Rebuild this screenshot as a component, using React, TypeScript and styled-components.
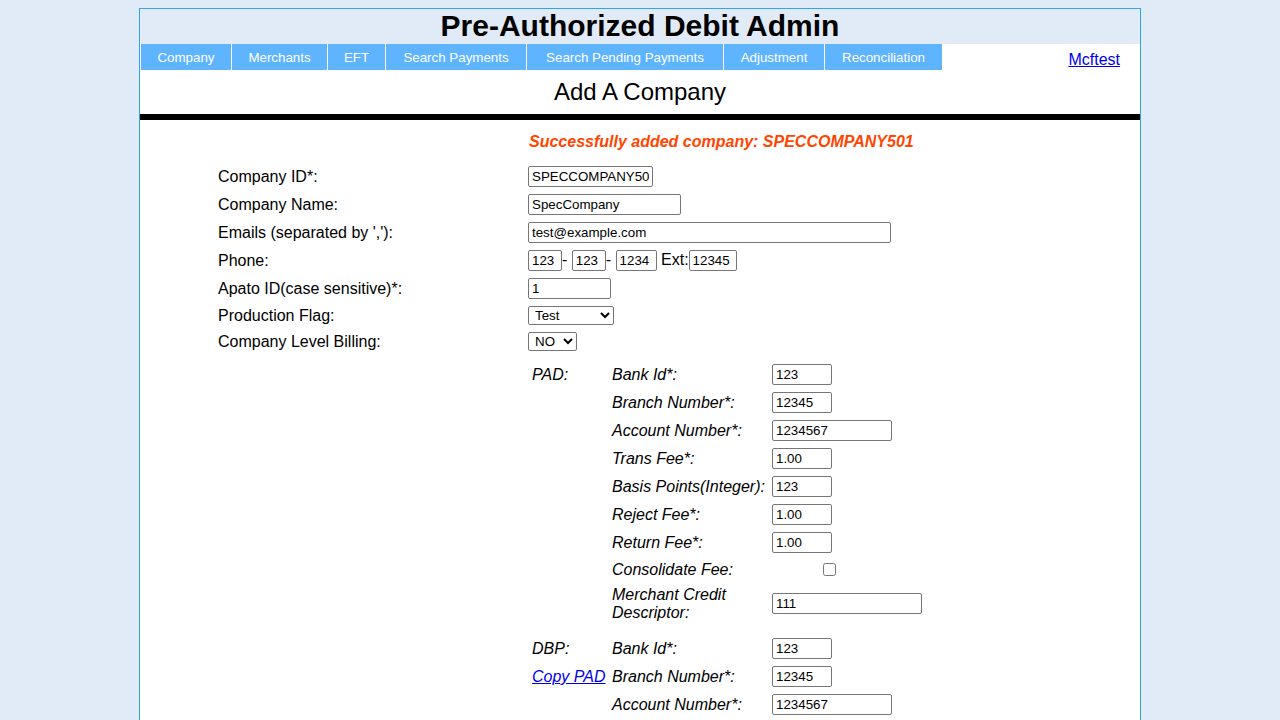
import React from "react";
import styled, { createGlobalStyle } from "styled-components";

const GlobalStyle = createGlobalStyle`
  html, body {
    margin: 0;
    padding: 0;
  }
  body {
    padding-top: 8px;
    background: #e1ebf7;
    font-family: "Liberation Sans", Arial, sans-serif;
    color: #000;
  }
`;

const Container = styled.div`
  width: 1000px;
  margin: 0 auto;
  background: #fff;
  border: 1px solid #2ea6e8;
  padding-bottom: 40px;
`;

const TitleBar = styled.h1`
  margin: 0;
  height: 35px;
  line-height: 33px;
  background: #e1ebf7;
  text-align: center;
  font-size: 30px;
  font-weight: bold;
`;

const NavRow = styled.div`
  display: flex;
  justify-content: space-between;
  align-items: flex-start;
  padding-left: 1px;
`;

const NavList = styled.div`
  display: flex;
  gap: 1px;
  height: 26px;
`;

const NavItem = styled.a<{ $w: number }>`
  display: block;
  box-sizing: border-box;
  width: ${(p) => p.$w}px;
  height: 26px;
  background: #5eb4ff;
  color: #fff;
  font-size: 13.33px;
  line-height: 25px;
  padding-top: 1px;
  text-align: center;
  white-space: nowrap;
  text-decoration: none;
  cursor: pointer;
`;

const UserLink = styled.a`
  font-size: 16px;
  color: #0000ee;
  text-decoration: underline;
  padding: 7px 20px 0 0;
  cursor: pointer;
`;

const PageHeading = styled.h2`
  margin: 0;
  height: 44px;
  display: flex;
  align-items: center;
  justify-content: center;
  font-size: 24px;
  font-weight: normal;
`;

const Divider = styled.div`
  height: 6px;
  background: #000;
`;

const Form = styled.div`
  padding-left: 78px;
`;

const Message = styled.div`
  height: 42px;
  box-sizing: border-box;
  padding: 13px 0 0 311px;
  font-size: 16px;
  line-height: 18px;
  font-weight: bold;
  font-style: italic;
  color: #ff4500;
`;

const Row = styled.div<{ $h: number }>`
  display: grid;
  grid-template-columns: 310px 1fr;
  align-items: center;
  height: ${(p) => p.$h}px;
  font-size: 16px;
`;

const Label = styled.div`
  font-size: 16px;
  padding-top: 2px;
`;

const Value = styled.div`
  display: flex;
  align-items: center;
  font-size: 16px;
  white-space: pre;
`;

const TextInput = styled.input<{ $w: number }>`
  box-sizing: border-box;
  width: ${(p) => p.$w}px;
  height: 21px;
  padding: 1px 3px;
  border: 1px solid #767676;
  border-radius: 2px;
  font-family: "Liberation Sans", Arial, sans-serif;
  font-size: 13.33px;
  color: #000;
  background: #fff;
  margin: 0;
`;

const Select = styled.select<{ $w: number }>`
  box-sizing: border-box;
  width: ${(p) => p.$w}px;
  height: 19px;
  padding: 0 0 0 2px;
  border: 1px solid #767676;
  border-radius: 2px;
  font-family: "Liberation Sans", Arial, sans-serif;
  font-size: 13.33px;
  color: #000;
  background: #fff;
  margin: 0;
`;

const Section = styled.div<{ $top: number }>`
  margin-left: 310px;
  margin-top: ${(p) => p.$top}px;
`;

const SubRow = styled.div<{ $h: number }>`
  display: grid;
  grid-template-columns: 84px 160px 1fr;
  align-items: center;
  height: ${(p) => p.$h}px;
  font-size: 16px;
  font-style: italic;
`;

const SectionName = styled.div`
  padding-left: 4px;
  padding-top: 2px;
`;

const SubLabel = styled.div`
  line-height: 18px;
  padding-top: 2px;
`;

const SubValue = styled.div`
  display: flex;
  align-items: center;
`;

const CopyLink = styled.a`
  color: #0000ee;
  text-decoration: underline;
  cursor: pointer;
`;

const Check = styled.input`
  width: 13px;
  height: 13px;
  margin: 0 0 0 51px;
`;

const navItems: { name: string; w: number }[] = [
  { name: "Company", w: 90 },
  { name: "Merchants", w: 95 },
  { name: "EFT", w: 57 },
  { name: "Search Payments", w: 140 },
  { name: "Search Pending Payments", w: 196 },
  { name: "Adjustment", w: 100 },
  { name: "Reconciliation", w: 117 },
];

type Field = { label: string; value: string; w: number };

const padFields: Field[] = [
  { label: "Bank Id*:", value: "123", w: 60 },
  { label: "Branch Number*:", value: "12345", w: 60 },
  { label: "Account Number*:", value: "1234567", w: 120 },
  { label: "Trans Fee*:", value: "1.00", w: 60 },
  { label: "Basis Points(Integer):", value: "123", w: 60 },
  { label: "Reject Fee*:", value: "1.00", w: 60 },
  { label: "Return Fee*:", value: "1.00", w: 60 },
];

const dbpFields: Field[] = [
  { label: "Bank Id*:", value: "123", w: 60 },
  { label: "Branch Number*:", value: "12345", w: 60 },
  { label: "Account Number*:", value: "1234567", w: 120 },
];

export default function App() {
  return (
    <>
      <GlobalStyle />
      <Container>
        <TitleBar>Pre-Authorized Debit Admin</TitleBar>
        <NavRow>
          <NavList>
            {navItems.map((n) => (
              <NavItem key={n.name} $w={n.w}>
                {n.name}
              </NavItem>
            ))}
          </NavList>
          <UserLink>Mcftest</UserLink>
        </NavRow>
        <PageHeading>Add A Company</PageHeading>
        <Divider />
        <Form>
          <Message>Successfully added company: SPECCOMPANY501</Message>
          <Row $h={28}>
            <Label>Company ID*:</Label>
            <Value>
              <TextInput $w={125} defaultValue="SPECCOMPANY501" />
            </Value>
          </Row>
          <Row $h={28}>
            <Label>Company Name:</Label>
            <Value>
              <TextInput $w={153} defaultValue="SpecCompany" />
            </Value>
          </Row>
          <Row $h={28}>
            <Label>Emails (separated by ','):</Label>
            <Value>
              <TextInput $w={363} defaultValue="test@example.com" />
            </Value>
          </Row>
          <Row $h={28}>
            <Label>Phone:</Label>
            <Value>
              <TextInput $w={34} defaultValue="123" />
              {"- "}
              <TextInput $w={34} defaultValue="123" />
              {"- "}
              <TextInput $w={41} defaultValue="1234" />
              {" Ext:"}
              <TextInput $w={48} defaultValue="12345" />
            </Value>
          </Row>
          <Row $h={28}>
            <Label>Apato ID(case sensitive)*:</Label>
            <Value>
              <TextInput $w={83} defaultValue="1" />
            </Value>
          </Row>
          <Row $h={26}>
            <Label>Production Flag:</Label>
            <Value>
              <Select $w={86} defaultValue="Test">
                <option>Test</option>
                <option>Production</option>
              </Select>
            </Value>
          </Row>
          <Row $h={26}>
            <Label>Company Level Billing:</Label>
            <Value>
              <Select $w={49} defaultValue="NO">
                <option>NO</option>
                <option>YES</option>
              </Select>
            </Value>
          </Row>

          <Section $top={6}>
            {padFields.map((f, i) => (
              <SubRow $h={28} key={"pad" + i}>
                <SectionName>{i === 0 ? "PAD:" : ""}</SectionName>
                <SubLabel>{f.label}</SubLabel>
                <SubValue>
                  <TextInput $w={f.w} defaultValue={f.value} />
                </SubValue>
              </SubRow>
            ))}
            <SubRow $h={26}>
              <SectionName />
              <SubLabel>Consolidate Fee:</SubLabel>
              <SubValue>
                <Check type="checkbox" />
              </SubValue>
            </SubRow>
            <SubRow $h={42}>
              <SectionName />
              <SubLabel>Merchant Credit Descriptor:</SubLabel>
              <SubValue>
                <TextInput $w={150} defaultValue="111" />
              </SubValue>
            </SubRow>
          </Section>

          <Section $top={10}>
            {dbpFields.map((f, i) => (
              <SubRow $h={28} key={"dbp" + i}>
                <SectionName>
                  {i === 0 ? "DBP:" : i === 1 ? <CopyLink>Copy PAD</CopyLink> : ""}
                </SectionName>
                <SubLabel>{f.label}</SubLabel>
                <SubValue>
                  <TextInput $w={f.w} defaultValue={f.value} />
                </SubValue>
              </SubRow>
            ))}
          </Section>
        </Form>
      </Container>
    </>
  );
}
